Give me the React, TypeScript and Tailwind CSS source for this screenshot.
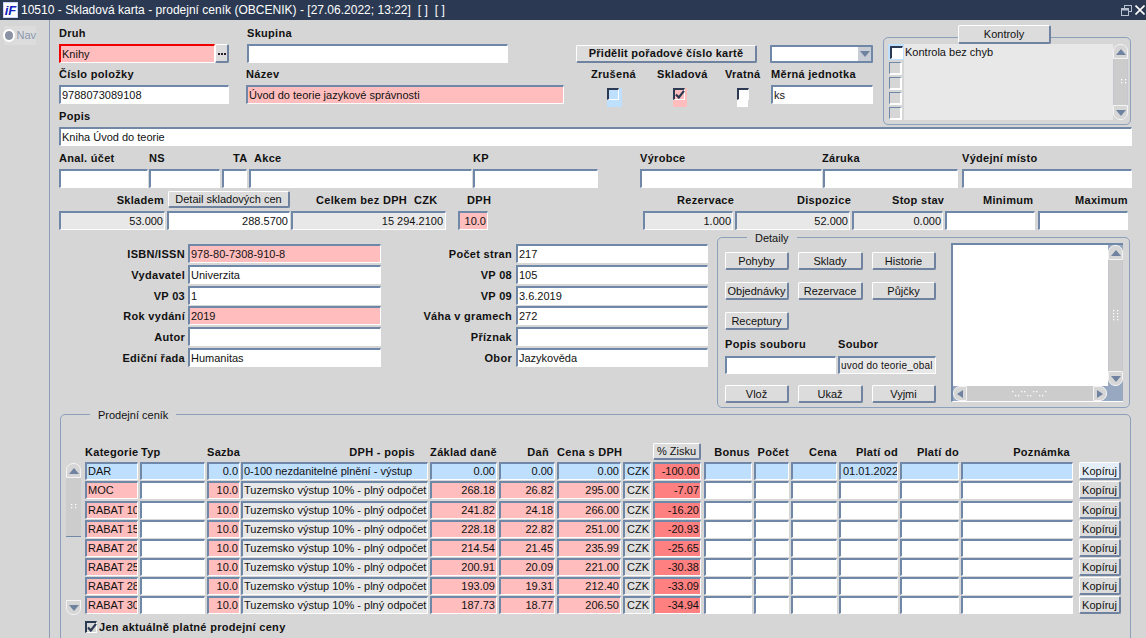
import React from "react";

const FIELD =
  "flex items-center shrink-0 overflow-hidden whitespace-nowrap border-t-2 border-l-2 border-r border-b border-t-[#7088a8] border-l-[#7088a8] border-r-white border-b-white px-[1px] text-[11px] text-[#111]";

function F({ c = "", children }: { c?: string; children?: React.ReactNode }) {
  return <div className={FIELD + " " + c}>{children}</div>;
}
function L({ c = "", children }: { c?: string; children?: React.ReactNode }) {
  return (
    <span className={"block shrink-0 whitespace-nowrap text-[11px] leading-[14px] font-bold tracking-[0.3px] text-[#111] " + c}>
      {children}
    </span>
  );
}
function B({ c = "", children }: { c?: string; children?: React.ReactNode }) {
  return (
    <div
      className={
        "flex shrink-0 items-center justify-center overflow-hidden whitespace-nowrap rounded-[2px] border-t border-l border-r-2 border-b-2 border-t-white border-l-white border-r-[#6f83a0] border-b-[#6f83a0] bg-[#dcdcdc] pt-[1px] text-[11px] text-[#111] " +
        c
      }
    >
      {children}
    </div>
  );
}
function Tri({ dir }: { dir: "up" | "down" | "left" | "right" }) {
  const p = {
    up: "0,7 5,1 10,7",
    down: "0,1 5,7 10,1",
    left: "7,0 1,4 7,8",
    right: "1,0 7,4 1,8",
  }[dir];
  return (
    <svg width={dir === "up" || dir === "down" ? 10 : 8} height={8} viewBox={dir === "up" || dir === "down" ? "0 0 10 8" : "0 0 8 8"}>
      <polygon points={p} fill="#6f83a0" />
    </svg>
  );
}
function Grip({ n = 2, vert = true }: { n?: number; vert?: boolean }) {
  const dots = [];
  for (let i = 0; i < n; i++) {
    dots.push(vert ? [1 + (i % 2) * 4, 1 + i * 3] : [1 + i * 6, 1 + (i % 2) * 4], vert ? [5 - (i % 2) * 4, 1 + i * 3] : [4 + i * 6, 5 - (i % 2) * 4]);
  }
  return (
    <svg width={vert ? 7 : n * 6 + 2} height={vert ? n * 3 + 2 : 7}>
      {dots.map((d, i) => (
        <rect key={i} x={d[0]} y={d[1]} width={1.3} height={1.3} fill="#fff" />
      ))}
    </svg>
  );
}
function ScrollBtn({ dir, c = "" }: { dir: "up" | "down"; c?: string }) {
  return (
    <div
      className={
        "flex h-[15px] w-full shrink-0 items-center justify-center border border-[#f4f4f4] bg-[#d6d6d6] " +
        (dir === "up" ? "rounded-t-[7px] " : "rounded-b-[7px] ") +
        c
      }
    >
      <Tri dir={dir} />
    </div>
  );
}
function Mark() {
  return (
    <svg className="absolute top-0 left-0" width="10" height="9" viewBox="0 0 10 9">
      <path d="M1 4.5 L3.8 7.5 L9 0.8" fill="none" stroke="#2b3a52" strokeWidth="2.2" />
    </svg>
  );
}
function Check({ bg = "", checked = false, w = "w-[15px]" }: { bg?: string; checked?: boolean; w?: string }) {
  return (
    <div className={"h-[19px] shrink-0 " + w + " " + bg}>
      <div className="relative mt-[3px] h-[12px] w-[12px] border-t-2 border-l-2 border-r border-b border-t-[#2b3a52] border-l-[#2b3a52] border-r-white border-b-white">
        {checked && <Mark />}
      </div>
    </div>
  );
}

const P = "bg-[#ffbdbd]";
const BL = "bg-[#bfdfff]";
const G = "bg-[#e8e8e8]";
const W = "bg-white";

const cols = [
  "w-[53px]",
  "w-[65px] ml-[2px]",
  "w-[33px] ml-[2px]",
  "w-[187px] ml-[1px]",
  "w-[67px] ml-[2px]",
  "w-[56px] ml-[2px]",
  "w-[64px] ml-[2px]",
  "w-[28px] ml-[2px]",
  "w-[48px] ml-[2px]",
  "w-[48px] ml-[3px]",
  "w-[35px] ml-[2px]",
  "w-[46px] ml-[2px]",
  "w-[59px] ml-[2px]",
  "w-[59px] ml-[2px]",
  "w-[112px] ml-[2px]",
];

const rows = [
  ["MOC", "10.0", "268.18", "26.82", "295.00", "-7.07"],
  ["RABAT 10", "10.0", "241.82", "24.18", "266.00", "-16.20"],
  ["RABAT 15", "10.0", "228.18", "22.82", "251.00", "-20.93"],
  ["RABAT 20", "10.0", "214.54", "21.45", "235.99", "-25.65"],
  ["RABAT 25", "10.0", "200.91", "20.09", "221.00", "-30.38"],
  ["RABAT 28", "10.0", "193.09", "19.31", "212.40", "-33.09"],
  ["RABAT 30", "10.0", "187.73", "18.77", "206.50", "-34.94"],
];

function Row({ first, tall, v }: { first?: boolean; tall?: boolean; v: string[] }) {
  const t = first ? BL : P;
  const e = first ? BL : W;
  const h = "h-[18px] ";
  return (
    <div className={"flex items-start " + (tall ? "h-[20px]" : "h-[19px]")}>
      <F c={h + cols[0] + " " + t}>{v[0]}</F>
      <F c={h + cols[1] + " " + e}></F>
      <F c={h + cols[2] + " justify-end " + t}>{v[1]}</F>
      <F c={h + cols[3] + " " + (first ? BL : G)}>{first ? "0-100 nezdanitelné plnění - výstup" : "Tuzemsko výstup 10% - plný odpočet"}</F>
      <F c={h + cols[4] + " justify-end " + t}>{v[2]}</F>
      <F c={h + cols[5] + " justify-end " + t}>{v[3]}</F>
      <F c={h + cols[6] + " justify-end " + t}>{v[4]}</F>
      <F c={h + cols[7] + " pl-[2px] " + (first ? BL : "bg-[#e0e0e0]")}>CZK</F>
      <F c={h + cols[8] + " justify-end bg-[#ff8080]"}>{v[5]}</F>
      <F c={h + cols[9] + " " + e}></F>
      <F c={h + cols[10] + " " + e}></F>
      <F c={h + cols[11] + " " + e}></F>
      <F c={h + cols[12] + " pl-[2px] " + e}>{first ? "01.01.2022" : ""}</F>
      <F c={h + cols[13] + " " + e}></F>
      <F c={h + cols[14] + " " + e}></F>
      <B c={"ml-[6px] h-[18px] w-[42px] " + (first ? "bg-[#e4eef8]" : "")}>Kopíruj</B>
    </div>
  );
}

function Mid({ label, value, c = W, lw, iw, extra = "" }: { label: string; value: string; c?: string; lw: string; iw: string; extra?: string }) {
  return (
    <div className={"flex h-[19px] items-center " + extra}>
      <L c={"text-right " + lw}>{label}</L>
      <F c={"h-[19px] " + iw + " " + c}>{value}</F>
    </div>
  );
}

export default function App() {
  return (
    <div className="flex h-[638px] w-[1146px] flex-col overflow-hidden bg-[#d6d6d6] font-['Liberation_Sans',Arial,sans-serif]">
      {/* Title bar */}
      <div className="flex h-[20px] shrink-0 items-center bg-[#2b3a52] text-[12px] text-white">
        <div className="ml-[3px] flex h-[16px] w-[15px] items-center justify-center border border-[#c8d4ff] bg-white text-[13px] leading-none font-bold italic text-[#1020c0]">
          iF
        </div>
        <span className="ml-[3px] whitespace-pre [word-spacing:0.1px]">10510 - Skladová karta - prodejní ceník (OBCENIK) - [27.06.2022; 13:22]  [ ]  [ ]</span>
        <div className="ml-auto mr-[1px] flex items-center gap-[3px]">
          <svg width="11" height="11" viewBox="0 0 11 11" fill="none" stroke="#b8c2d0" strokeWidth="1">
            <rect x="3.5" y="0.5" width="7" height="6" />
            <rect x="0.5" y="3.5" width="7" height="7" fill="#2b3a52" />
            <rect x="0.5" y="3.5" width="7" height="2" fill="#b8c2d0" stroke="none" />
          </svg>
          <svg width="10" height="10" viewBox="0 0 10 10" stroke="#fff" strokeWidth="1.6">
            <path d="M0.5 0.5 L9.5 9.5 M9.5 0.5 L0.5 9.5" />
          </svg>
        </div>
      </div>

      <div className="flex min-h-0 flex-1">
        {/* Sidebar */}
        <div className="w-[50px] shrink-0 border-r border-r-[#8d9db5] pt-[6px] pl-[4px]">
          <div className="flex h-[19px] w-[32px] items-center bg-[#dcdcdc]">
            <div className="ml-[1px] h-[9px] w-[9px] rounded-full bg-[#8a93a3] outline-2 outline-white"></div>
            <span className="ml-[3px] text-[11px] font-medium text-[#8a98ae]">Nav</span>
          </div>
        </div>

        {/* Main */}
        <div className="min-w-0 flex-1 pl-[9px]">
          {/* Top block */}
          <div className="flex h-[103px]">
            <div className="w-[824px] shrink-0 pt-[6px]">
              <div className="flex">
                <L c="w-[188px]">Druh</L>
                <L>Skupina</L>
              </div>
              <div className="mt-[4px] flex h-[19px] items-center">
                <F c="h-[19px] w-[156px] border-2 border-t-[#f00000] border-l-[#f00000] border-r-[#f00000] border-b-[#f00000] bg-[#ffbdbd]">Knihy</F>
                <B c="h-[19px] w-[14px] bg-[#c8ccd4]">
                  <svg width="8" height="4" viewBox="0 0 8 4">
                    <rect x="0" y="1" width="2" height="2" fill="#2a1a2a" />
                    <rect x="3" y="1" width="2" height="2" fill="#2a1a2a" />
                    <rect x="6" y="1" width="2" height="2" fill="#2a1a2a" />
                  </svg>
                </B>
                <F c="ml-[18px] h-[19px] w-[261px] bg-white"></F>
                <B c="ml-[68px] h-[18px] w-[181px] font-bold tracking-[0.25px]">Přidělit pořadové číslo kartě</B>
                <div className="ml-[13px] flex h-[18px] w-[103px] items-stretch rounded-[1px] border-2 border-t-[#7088a8] border-l-[#7088a8] border-r-[#7088a8] border-b-[#7088a8] bg-white">
                  <div className="flex-1"></div>
                  <div className="flex w-[13px] items-center justify-center bg-[#c8ccd4]">
                    <Tri dir="down" />
                  </div>
                </div>
              </div>
              <div className="mt-[4px] flex">
                <L c="w-[187px]">Číslo položky</L>
                <L c="w-[345px]">Název</L>
                <L c="w-[66px]">Zrušená</L>
                <L c="w-[68px]">Skladová</L>
                <L c="w-[46px]">Vratná</L>
                <L>Měrná jednotka</L>
              </div>
              <div className="mt-[4px] flex h-[19px] items-start">
                <F c="h-[19px] w-[170px] bg-white">9788073089108</F>
                <F c="ml-[17px] h-[19px] w-[318px] bg-[#ffbdbd]">Úvod do teorie jazykové správnosti</F>
                <div className="ml-[43px]">
                  <Check bg={BL} />
                </div>
                <div className="ml-[51px]">
                  <Check bg={P} checked w="w-[14px]" />
                </div>
                <div className="ml-[50px]">
                  <Check bg={W} w="w-[11px]" />
                </div>
                <F c="ml-[23px] h-[19px] w-[102px] bg-white">ks</F>
              </div>
              <L c="mt-[5px]">Popis</L>
            </div>
            {/* Kontroly */}
            <div className="relative mt-[17px] flex h-[88px] w-[248px] shrink-0 rounded-[5px] border border-[#8ca0bc] pt-[6px] pl-[4px]">
              <B c="absolute -top-[13px] left-[74px] h-[19px] w-[93px]">Kontroly</B>
              <div className="flex w-[16px] shrink-0 flex-col">
                <div className="flex h-[16px] items-center justify-center bg-[#bfdfff]">
                  <div className="h-[13px] w-[13px] border-t-2 border-l-2 border-r border-b border-t-[#2b3a52] border-l-[#2b3a52] border-r-white border-b-white bg-white"></div>
                </div>
                {[0, 1, 2, 3].map((i) => (
                  <div key={i} className="mt-[2px] ml-[1px] h-[13px] w-[13px] border-t border-l border-r-2 border-b-2 border-t-[#7088a8] border-l-[#7088a8] border-r-white border-b-white"></div>
                ))}
              </div>
              <div className="h-[76px] w-[209px] shrink-0 bg-[#e8e8e8] pl-[1px] text-[11px] leading-[16px] text-[#111]">Kontrola bez chyb</div>
              <div className="flex h-[76px] w-[15px] shrink-0 flex-col">
                <ScrollBtn dir="up" />
                <div className="flex flex-1 items-center justify-end border-x border-[#c4c8ce] bg-[#cccccc]">
                  <Grip n={2} />
                </div>
                <ScrollBtn dir="down" />
              </div>
            </div>
          </div>

          {/* Popis */}
          <F c="mt-[4px] h-[19px] w-[1073px] rounded-[1px] bg-white">Kniha Úvod do teorie</F>

          <div className="mt-[5px] flex">
            <L c="w-[90px]">Anal. účet</L>
            <L c="w-[84px]">NS</L>
            <L c="w-[21px]">TA</L>
            <L c="w-[219px]">Akce</L>
            <L c="w-[167px]">KP</L>
            <L c="w-[182px]">Výrobce</L>
            <L c="w-[140px]">Záruka</L>
            <L>Výdejní místo</L>
          </div>
          <div className="mt-[4px] flex">
            <F c="h-[19px] w-[89px] bg-white" />
            <F c="ml-[1px] h-[19px] w-[71px] bg-white" />
            <F c="ml-[2px] h-[19px] w-[25px] bg-white" />
            <F c="ml-[2px] h-[19px] w-[223px] bg-white" />
            <F c="ml-[1px] h-[19px] w-[125px] bg-white" />
            <F c="ml-[42px] h-[19px] w-[182px] bg-white" />
            <F c="ml-[1px] h-[19px] w-[135px] bg-white" />
            <F c="ml-[4px] h-[19px] w-[170px] bg-white" />
          </div>
          <div className="mt-[3px] flex h-[17px] items-center">
            <L c="w-[105px] text-right">Skladem</L>
            <B c="ml-[4px] h-[17px] w-[122px]">Detail skladových cen</B>
            <L c="ml-[26px] w-[98px]">Celkem bez DPH</L>
            <L c="w-[53px]">CZK</L>
            <L c="w-[21px]">DPH</L>
            <L c="ml-[189px] w-[57px]">Rezervace</L>
            <L c="ml-[63px] w-[53px]">Dispozice</L>
            <L c="ml-[42px] w-[48px]">Stop stav</L>
            <L c="ml-[43px] w-[52px]">Minimum</L>
            <L c="ml-[40px]">Maximum</L>
          </div>
          <div className="mt-[3px] flex">
            <F c={"h-[19px] w-[106px] justify-end " + G}>53.000</F>
            <F c="ml-[2px] h-[19px] w-[123px] justify-end bg-white">288.5700</F>
            <F c={"ml-[1px] h-[19px] w-[155px] justify-end pr-[2px] " + G}>15 294.2100</F>
            <F c={"ml-[12px] h-[19px] w-[30px] justify-end " + P}>10.0</F>
            <F c={"ml-[155px] h-[19px] w-[90px] justify-end " + G}>1.000</F>
            <F c={"ml-[2px] h-[19px] w-[115px] justify-end " + G}>52.000</F>
            <F c={"ml-[2px] h-[19px] w-[91px] justify-end " + G}>0.000</F>
            <F c="ml-[2px] h-[19px] w-[90px] bg-white" />
            <F c="ml-[3px] h-[19px] w-[90px] bg-white" />
          </div>

          {/* Middle */}
          <div className="mt-[7px] flex h-[171px]">
            <div className="flex flex-col gap-[2px] pt-[7px]">
              <Mid label="ISBN/ISSN" value="978-80-7308-910-8" c={P} lw="w-[126px]" iw="ml-[3px] w-[193px]" />
              <Mid label="Vydavatel" value="Univerzita" lw="w-[126px]" iw="ml-[3px] w-[193px]" />
              <Mid label="VP 03" value="1" lw="w-[126px]" iw="ml-[3px] w-[193px]" extra="mb-[-1px]" />
              <Mid label="Rok vydání" value="2019" c={P} lw="w-[126px]" iw="ml-[3px] w-[193px]" />
              <Mid label="Autor" value="" lw="w-[126px]" iw="ml-[3px] w-[193px]" />
              <Mid label="Ediční řada" value="Humanitas" lw="w-[126px]" iw="ml-[3px] w-[193px]" />
            </div>
            <div className="flex flex-col gap-[2px] pt-[7px]">
              <Mid label="Počet stran" value="217" lw="w-[131px]" iw="ml-[4px] w-[192px]" />
              <Mid label="VP 08" value="105" lw="w-[131px]" iw="ml-[4px] w-[192px]" />
              <Mid label="VP 09" value="3.6.2019" lw="w-[131px]" iw="ml-[4px] w-[192px]" extra="mb-[-1px]" />
              <Mid label="Váha v gramech" value="272" lw="w-[131px]" iw="ml-[4px] w-[192px]" />
              <Mid label="Příznak" value="" lw="w-[131px]" iw="ml-[4px] w-[192px]" />
              <Mid label="Obor" value="Jazykověda" lw="w-[131px]" iw="ml-[4px] w-[192px]" />
            </div>

            <div className="relative ml-[9px] flex w-[413px] shrink-0 rounded-[5px] border border-[#8ca0bc]">
              <span className="absolute -top-[7px] left-[29px] bg-[#d6d6d6] px-[8px] text-[11px] leading-[14px] text-[#111]">Detaily</span>
              <div className="w-[233px] shrink-0 pt-[14px] pl-[7px]">
                <div className="flex">
                  <B c="h-[18px] w-[64px]">Pohyby</B>
                  <B c="ml-[9px] h-[18px] w-[65px]">Sklady</B>
                  <B c="ml-[9px] h-[18px] w-[64px]">Historie</B>
                </div>
                <div className="mt-[12px] flex">
                  <B c="h-[18px] w-[64px]">Objednávky</B>
                  <B c="ml-[9px] h-[18px] w-[65px]">Rezervace</B>
                  <B c="ml-[9px] h-[18px] w-[64px]">Půjčky</B>
                </div>
                <div className="mt-[12px] flex">
                  <B c="h-[18px] w-[64px]">Receptury</B>
                </div>
                <div className="mt-[7px] flex">
                  <L c="w-[113px]">Popis souboru</L>
                  <L>Soubor</L>
                </div>
                <div className="mt-[5px] flex">
                  <F c="h-[18px] w-[111px] bg-white" />
                  <F c={"ml-[2px] h-[18px] w-[98px] " + G}>
                    <span className="text-[10px] tracking-[0.2px]">uvod do teorie_obal</span>
                  </F>
                </div>
                <div className="mt-[11px] flex">
                  <B c="h-[18px] w-[64px]">Vlož</B>
                  <B c="ml-[9px] h-[18px] w-[65px]">Ukaž</B>
                  <B c="ml-[9px] h-[18px] w-[64px]">Vyjmi</B>
                </div>
              </div>
              <div className="mt-[5px] flex h-[159px] w-[172px] shrink-0 flex-col border-t-2 border-l-2 border-b border-t-[#7088a8] border-l-[#7088a8] border-b-white bg-[#98a8c0]">
                <div className="flex min-h-0 flex-1">
                  <div className="flex-1 bg-white"></div>
                  <div className="flex w-[15px] shrink-0 flex-col">
                    <ScrollBtn dir="up" />
                    <div className="flex flex-1 items-center justify-center border-x border-[#c4c8ce] bg-[#cccccc]">
                      <Grip n={4} />
                    </div>
                    <ScrollBtn dir="down" />
                  </div>
                </div>
                <div className="flex h-[15px] shrink-0 pr-[16px]">
                  <div className="flex w-[14px] items-center justify-center rounded-l-[7px] border border-[#f4f4f4] bg-[#d6d6d6]">
                    <Tri dir="left" />
                  </div>
                  <div className="flex flex-1 items-center justify-center bg-[#cccccc]">
                    <Grip n={6} vert={false} />
                  </div>
                  <div className="flex w-[14px] items-center justify-center rounded-r-[7px] border border-[#f4f4f4] bg-[#d6d6d6]">
                    <Tri dir="right" />
                  </div>
                </div>
              </div>
            </div>
          </div>

          {/* Prodejní ceník */}
          <div className="relative mt-[6px] ml-[1px] h-[240px] w-[1071px] rounded-t-[5px] border border-[#8ca0bc] pt-[26px] pl-[5px]">
            <span className="absolute -top-[7px] left-[29px] bg-[#d6d6d6] px-[8px] text-[11px] leading-[14px] text-[#111]">Prodejní ceník</span>
            {/* Header */}
            <div className="ml-[19px] flex h-[21px] items-center">
              <L c={cols[0]}>Kategorie</L>
              <L c={cols[1] + " pl-[1px]"}>Typ</L>
              <L c={cols[2] + " text-right"}>Sazba</L>
              <L c={cols[3] + " pr-[13px] text-right"}>DPH - popis</L>
              <L c={cols[4] + " text-right"}>Základ daně</L>
              <L c={cols[5] + " pr-[6px] text-right"}>Daň</L>
              <L c={cols[6] + " text-right"}>Cena s DPH</L>
              <L c={cols[7]}></L>
              <B c={cols[8] + " h-[17px]"}>% Zisku</B>
              <L c={cols[9] + " pr-[2px] text-right"}>Bonus</L>
              <L c={cols[10] + " text-right"}>Počet</L>
              <L c={cols[11] + " text-right"}>Cena</L>
              <L c={cols[12] + " text-right"}>Platí od</L>
              <L c={cols[13] + " text-right"}>Platí do</L>
              <L c={cols[14] + " pr-[3px] text-right"}>Poznámka</L>
            </div>
            <div className="flex">
              <div className="flex h-[153px] w-[15px] shrink-0 flex-col">
                <ScrollBtn dir="up" c="mt-[1px]" />
                <div className="flex h-[59px] shrink-0 items-center justify-center border-b border-b-[#7088a8] bg-[#cccccc]">
                  <Grip n={2} />
                </div>
                <div className="flex-1"></div>
                <ScrollBtn dir="down" />
              </div>
              <div className="ml-[4px]">
                <Row first v={["DAR", "0.0", "0.00", "0.00", "0.00", "-100.00"]} />
                {rows.map((r, i) => (
                  <Row key={r[0]} v={r} tall={i === 0} />
                ))}
              </div>
            </div>
            <div className="mt-[5px] ml-[19px] flex h-[13px] items-center">
              <div className="relative h-[12px] w-[12px] border-t-2 border-l-2 border-r border-b border-t-[#2b3a52] border-l-[#2b3a52] border-r-white border-b-white">
                <Mark />
              </div>
              <L c="ml-[2px]">Jen aktuálně platné prodejní ceny</L>
            </div>
          </div>
        </div>
      </div>
    </div>
  );
}
